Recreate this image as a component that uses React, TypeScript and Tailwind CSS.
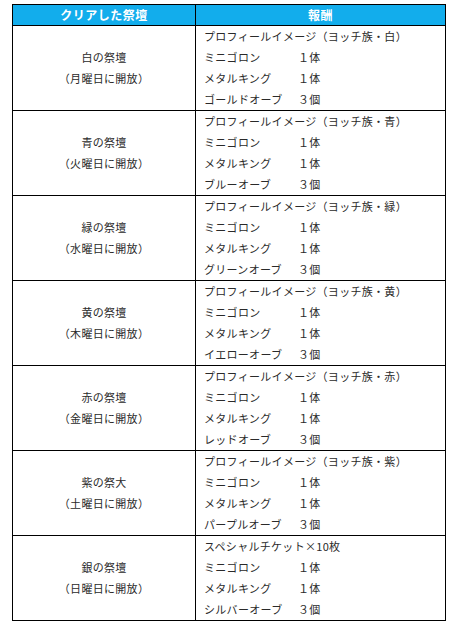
const altars = [
  { name: '白の祭壇', day: '月', first: 'プロフィールイメージ（ヨッチ族・白）', orb: 'ゴールドオーブ' },
  { name: '青の祭壇', day: '火', first: 'プロフィールイメージ（ヨッチ族・青）', orb: 'ブルーオーブ' },
  { name: '緑の祭壇', day: '水', first: 'プロフィールイメージ（ヨッチ族・緑）', orb: 'グリーンオーブ' },
  { name: '黄の祭壇', day: '木', first: 'プロフィールイメージ（ヨッチ族・黄）', orb: 'イエローオーブ' },
  { name: '赤の祭壇', day: '金', first: 'プロフィールイメージ（ヨッチ族・赤）', orb: 'レッドオーブ' },
  { name: '紫の祭大', day: '土', first: 'プロフィールイメージ（ヨッチ族・紫）', orb: 'パープルオーブ' },
  { name: '銀の祭壇', day: '日', first: 'スペシャルチケット×10枚', orb: 'シルバーオーブ' },
];

function Reward({ label, qty }: { label: string; qty?: string }) {
  return (
    <div className="flex h-[21px] items-center">
      <span className="w-[94px] shrink-0 whitespace-nowrap">{label}</span>
      {qty && <span>{qty}</span>}
    </div>
  );
}

export default function App() {
  return (
    <div
      className="min-h-screen bg-white pl-3 pt-1 text-[11px] tracking-[0.3px] text-[#2a2a2a]"
      style={{ fontFamily: '"Noto Sans CJK JP", "Noto Sans", sans-serif' }}
    >
      <div className="w-[434px] border border-black">
        <div className="flex h-5 bg-[#12adec] text-[12px] font-bold tracking-[0.5px] text-white">
          <div className="flex w-[183px] items-center justify-center border-r border-black">クリアした祭壇</div>
          <div className="flex flex-1 items-center justify-center">報酬</div>
        </div>
        {altars.map((a) => (
          <div key={a.day} className="flex border-t border-black">
            <div className="flex w-[183px] flex-col items-center justify-center border-r border-black leading-[21px]">
              <span>{a.name}</span>
              <span>（{a.day}曜日に開放）</span>
            </div>
            <div className="flex-1 pl-2">
              <Reward label={a.first} />
              <Reward label="ミニゴロン" qty="１体" />
              <Reward label="メタルキング" qty="１体" />
              <Reward label={a.orb} qty="３個" />
            </div>
          </div>
        ))}
      </div>
    </div>
  );
}
